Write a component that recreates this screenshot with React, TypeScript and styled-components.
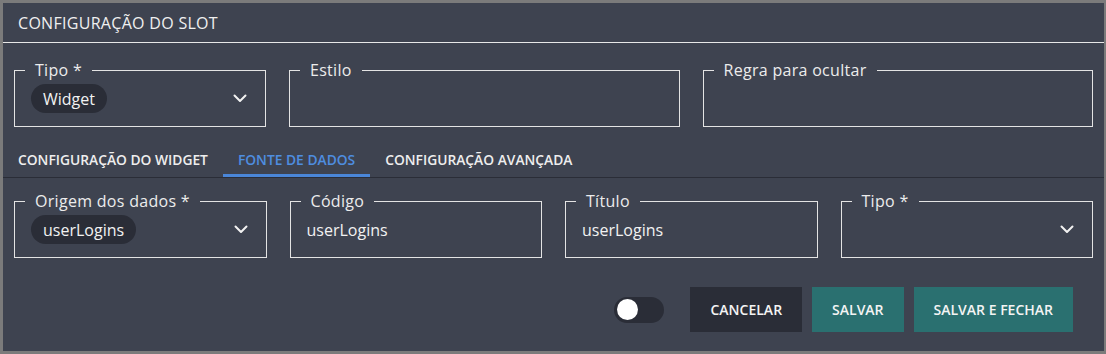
import styled, { createGlobalStyle } from "styled-components";

const GlobalStyle = createGlobalStyle`
  html, body {
    margin: 0;
    padding: 0;
    background: #7b7b7b;
  }
  * {
    box-sizing: border-box;
  }
`;

const Frame = styled.div`
  width: 1106px;
  height: 354px;
  border: 3px solid #7b7b7b;
  border-right-width: 2px;
  background-color: #3e4350;
  font-family: "Open Sans", "Noto Sans", sans-serif;
  color: #eeeeee;
  display: flex;
  flex-direction: column;
`;

const Header = styled.div`
  height: 40px;
  border-bottom: 1px solid #e8e8e8;
  display: flex;
  align-items: center;
  padding-left: 15px;
  font-size: 16px;
  letter-spacing: 0.3px;
  color: #f0f0f0;
`;

const Body = styled.div`
  padding: 18px 11px 0;
`;

const Row = styled.div<{ $cols: string; $top?: number }>`
  display: grid;
  grid-template-columns: ${(props) => props.$cols};
  column-gap: 23px;
  margin-top: ${(props) => props.$top ?? 0}px;
`;

const Field = styled.fieldset`
  margin: 0;
  min-width: 0;
  height: 66px;
  padding: 0 16px;
  border: 1px solid #e4e4e4;
  display: flex;
  align-items: center;
  justify-content: space-between;
`;

const Legend = styled.legend`
  margin-left: -6px;
  padding: 0 10px;
  font-size: 16px;
  font-weight: 500;
  letter-spacing: 0.3px;
  color: #ececec;
  line-height: 18px;
`;

const Chip = styled.span`
  display: inline-flex;
  align-items: center;
  height: 29px;
  padding: 0 12px;
  border-radius: 15px;
  background-color: #2a2d37;
  font-size: 16px;
  font-weight: 500;
  color: #f2f2f2;
  margin-top: -8px;
`;

const Value = styled.span`
  font-size: 16px;
  font-weight: 500;
  color: #f2f2f2;
  margin-top: -7px;
`;

const Chevron = styled.svg`
  width: 14px;
  height: 9px;
  margin-right: 2px;
  margin-top: -8px;
  margin-left: auto;
  flex-shrink: 0;
`;

const TabBar = styled.div`
  display: flex;
  margin: 15px -11px 0;
  border-bottom: 1px solid #2a2d37;
`;

const Tab = styled.div<{ $active?: boolean }>`
  padding: 3px 15px 0;
  height: 35px;
  display: flex;
  align-items: center;
  font-size: 13.8px;
  font-weight: 600;
  color: ${(props) => (props.$active ? "#4e8ee0" : "#eeeeee")};
  border-bottom: 3px solid
    ${(props) => (props.$active ? "#4a86d8" : "transparent")};
`;

const Footer = styled.div`
  display: flex;
  justify-content: flex-end;
  align-items: center;
  gap: 10px;
  padding: 29px 31px 0 0;
`;

const Toggle = styled.div`
  width: 50px;
  height: 26px;
  border-radius: 13px;
  background-color: #2a2d37;
  padding: 3px;
  margin-right: 16px;
  display: flex;
  align-items: center;
`;

const Knob = styled.div`
  width: 21px;
  height: 21px;
  border-radius: 50%;
  background-color: #ffffff;
`;

const Button = styled.button<{ $primary?: boolean }>`
  height: 45px;
  padding: 0 20px;
  border: none;
  border-radius: 0;
  font-family: inherit;
  font-size: 14px;
  font-weight: 600;
  color: #f4f4f4;
  background-color: ${(props) => (props.$primary ? "#2a7070" : "#2a2d37")};
`;

function ChevronDown() {
  return (
    <Chevron viewBox="0 0 14 9">
      <path
        d="M1.5 1.5l5.5 5.5 5.5-5.5"
        fill="none"
        stroke="#f2f2f2"
        strokeWidth="2"
        strokeLinecap="round"
        strokeLinejoin="round"
      />
    </Chevron>
  );
}

function App() {
  return (
    <>
      <GlobalStyle />
      <Frame>
        <Header>CONFIGURAÇÃO DO SLOT</Header>
        <Body>
          <Row $cols="252px 1fr 1fr">
            <Field>
              <Legend>Tipo *</Legend>
              <Chip>Widget</Chip>
              <ChevronDown />
            </Field>
            <Field>
              <Legend>Estilo</Legend>
            </Field>
            <Field>
              <Legend>Regra para ocultar</Legend>
            </Field>
          </Row>
          <TabBar>
            <Tab>CONFIGURAÇÃO DO WIDGET</Tab>
            <Tab $active>FONTE DE DADOS</Tab>
            <Tab>CONFIGURAÇÃO AVANÇADA</Tab>
          </TabBar>
          <Row $cols="repeat(4, 1fr)" $top={14}>
            <Field>
              <Legend>Origem dos dados *</Legend>
              <Chip>userLogins</Chip>
              <ChevronDown />
            </Field>
            <Field>
              <Legend>Código</Legend>
              <Value>userLogins</Value>
            </Field>
            <Field>
              <Legend>Título</Legend>
              <Value>userLogins</Value>
            </Field>
            <Field>
              <Legend>Tipo *</Legend>
              <ChevronDown />
            </Field>
          </Row>
        </Body>
        <Footer>
          <Toggle>
            <Knob />
          </Toggle>
          <Button>CANCELAR</Button>
          <Button $primary>SALVAR</Button>
          <Button $primary>SALVAR E FECHAR</Button>
        </Footer>
      </Frame>
    </>
  );
}

export default App;
